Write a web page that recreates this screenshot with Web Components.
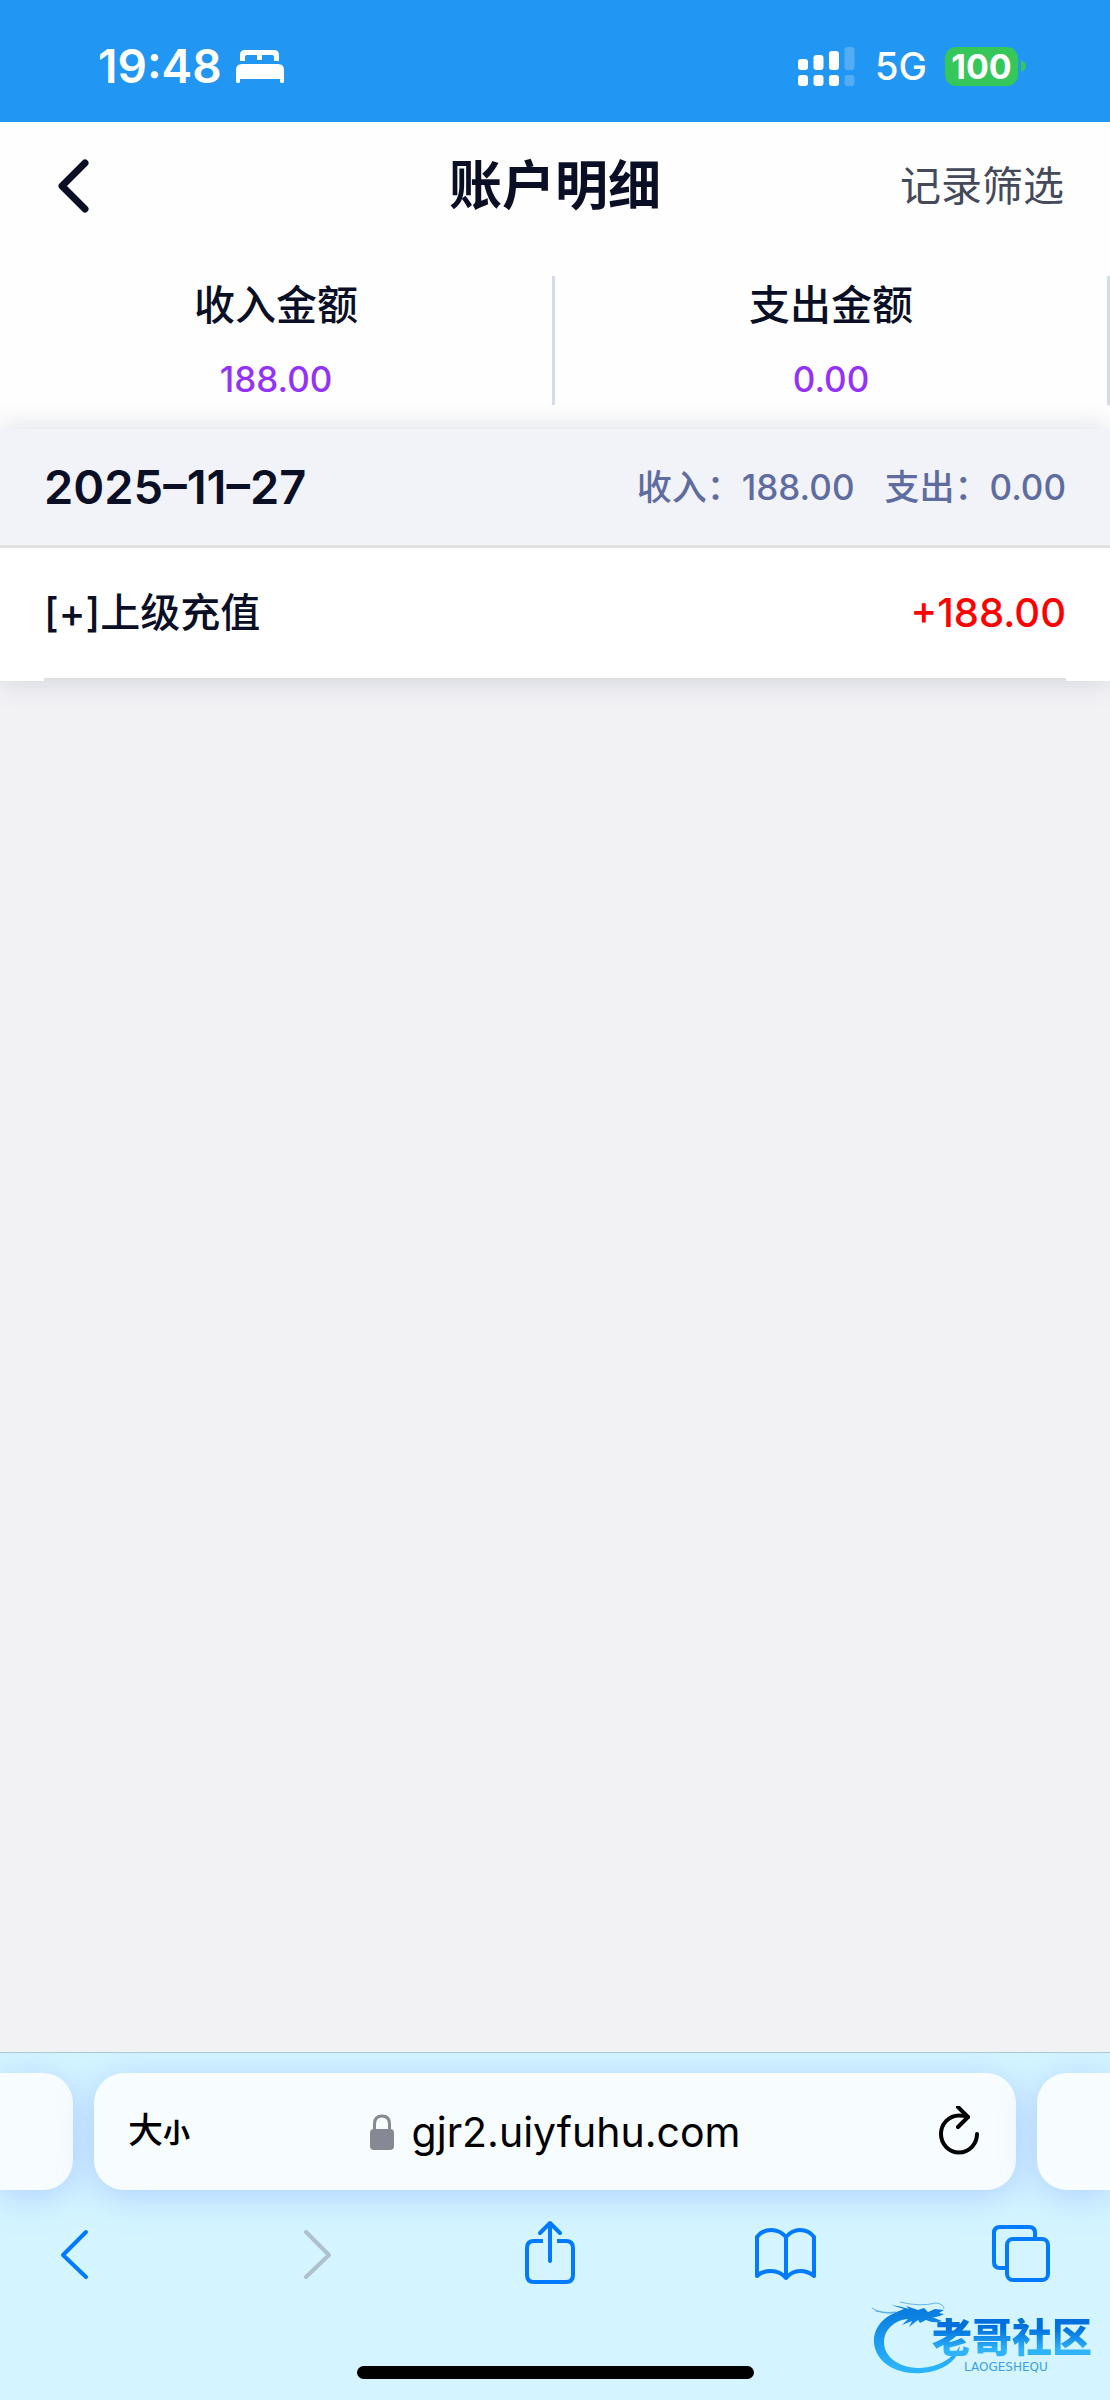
<!DOCTYPE html>
<html lang="zh-CN">
<head>
<meta charset="UTF-8">
<meta name="viewport" content="width=device-width, initial-scale=1.0">
<title>账户明细</title>
<style>
  :root {
    --ink: #0b0f26;
    --muted: #5f6ca0;
    --accent: #9333fa;
    --income: #ff0000;
    --line: #e0e0e1;
    --side: 44px;
  }

  body {
    margin: 0;
    min-height: 100vh;
    display: flex;
    flex-direction: column;
    background: #f2f2f5;
    color: var(--ink);
    font-family: Inter, "Noto Sans CJK SC", sans-serif;
    font-size: 41px;
    line-height: 58px;
  }

  main {
    flex: 1;
  }

  .totals {
    display: grid;
    grid-template-columns: 1fr 1fr;
    padding: 26px 0 24px;
    background: #fefefe;
  }
</style>
</head>
<body>
  <status-bar></status-bar>
  <page-header>
    账户明细
    <span slot="action">记录筛选</span>
  </page-header>
  <main>
    <section class="totals">
      <total-cell label="收入金额">188.00</total-cell>
      <total-cell label="支出金额">0.00</total-cell>
    </section>
    <day-group date="2025–11–27" income="188.00" expense="0.00">
      <record-row amount="+188.00">[+]上级充值</record-row>
    </day-group>
  </main>
  <browser-bar host="gjr2.uiyfuhu.com">
    <site-mark></site-mark>
  </browser-bar>

<script>
class StatusBar extends HTMLElement {
  connectedCallback() {
    this.attachShadow({ mode: 'open' });
    this.shadowRoot.innerHTML = `
      <style>
        :host {
          display: flex;
          justify-content: space-between;
          align-items: center;
          height: 122px;
          padding: 10px 84px 0 98px;
          box-sizing: border-box;
          background: #2196f3;
          color: #fff;
        }

        .left, .right {
          display: flex;
          align-items: center;
        }

        .left {
          gap: 14px;
        }

        .time {
          font-size: 46px;
          font-weight: 600;
        }

        .network {
          margin: 0 18px 0 20px;
          font-size: 38px;
          font-weight: 500;
        }

        .battery {
          width: 73px;
          height: 39px;
          border-radius: 11px;
          background: #35c759;
          font-size: 34px;
          font-weight: 700;
          line-height: 39px;
          text-align: center;
        }

        svg {
          display: block;
        }
      </style>
      <div class="left">
        <span class="time">19:48</span>
        <svg width="48" height="34" viewBox="0 0 48 34" fill="#fff">
          <path d="M4 12V6q0-5 5-5h29q5 0 5 5v6h-5V8q0-2-2-2H26v5h-5V6H11q-2 0-2 2v4z"/>
          <path d="M0 33V21q0-6 6-6h36q6 0 6 6v12q0 1-2 1t-2-1v-3H4v3q0 1-2 1t-2-1z"/>
        </svg>
      </div>
      <div class="right">
        <svg width="57" height="39" viewBox="0 0 57 39" fill="#fff">
          <rect x="0" y="12" width="10" height="11" rx="3"/>
          <rect x="15.500" y="8" width="10" height="15" rx="3"/>
          <rect x="31" y="4" width="10" height="19" rx="3"/>
          <rect x="0" y="28" width="10" height="11" rx="3"/>
          <rect x="15.500" y="28" width="10" height="11" rx="3"/>
          <rect x="31" y="28" width="10" height="11" rx="3"/>
          <g opacity="0.22">
            <rect x="46.500" y="0" width="10" height="23" rx="3"/>
            <rect x="46.500" y="28" width="10" height="11" rx="3"/>
          </g>
        </svg>
        <span class="network">5G</span>
        <span class="battery">100</span>
        <svg width="8" height="14" viewBox="0 0 8 14" fill="#35c759"><path d="M3 1q5 2 5 6t-5 6z"/></svg>
      </div>
    `;
  }
}

class PageHeader extends HTMLElement {
  connectedCallback() {
    this.attachShadow({ mode: 'open' });
    this.shadowRoot.innerHTML = `
      <style>
        :host {
          display: grid;
          grid-template-columns: 1fr auto 1fr;
          align-items: center;
          height: 128px;
          padding: 0 46px;
          background: #fefefe;
        }

        h1 {
          margin: 0;
          font-size: 53px;
          font-weight: 600;
        }

        button {
          padding: 0;
          border: none;
          background: none;
          color: #454a5b;
          font: inherit;
          cursor: pointer;
        }

        .back {
          justify-self: start;
          padding: 0 10px;
          color: var(--ink);
        }

        .action {
          justify-self: end;
        }

        svg {
          display: block;
        }
      </style>
      <button class="back" aria-label="返回">
        <svg width="36" height="60" viewBox="0 0 36 60" fill="none" stroke="currentColor" stroke-width="7" stroke-linecap="round" stroke-linejoin="round"><path d="M29 7L6 30l23 23"/></svg>
      </button>
      <h1><slot></slot></h1>
      <button class="action"><slot name="action"></slot></button>
    `;
  }
}

class TotalCell extends HTMLElement {
  connectedCallback() {
    this.attachShadow({ mode: 'open' });
    this.shadowRoot.innerHTML = `
      <style>
        :host {
          display: flex;
          flex-direction: column;
          gap: 20px;
          border-right: 3px solid #d5dce9;
          text-align: center;
          font-weight: 500;
        }

        .value {
          color: var(--accent);
          font-size: 35px;
          line-height: 51px;
        }
      </style>
      <div class="label">${this.getAttribute('label')}</div>
      <div class="value"><slot></slot></div>
    `;
  }
}

class DayGroup extends HTMLElement {
  connectedCallback() {
    this.attachShadow({ mode: 'open' });
    this.shadowRoot.innerHTML = `
      <style>
        :host {
          display: block;
          background: #fff;
          box-shadow: 0 0 27px rgba(70, 80, 130, 0.2);
        }

        header {
          display: flex;
          align-items: center;
          height: 116px;
          padding: 0 var(--side);
          border-bottom: 3px solid var(--line);
          background: #f2f3f9;
          color: var(--muted);
          font-size: 35px;
          font-weight: 500;
        }

        h2 {
          flex: 1;
          margin: 0;
          color: var(--ink);
          font-size: 47px;
          font-weight: 600;
        }

        span + span {
          margin-left: 30px;
        }
      </style>
      <header>
        <h2>${this.getAttribute('date')}</h2>
        <span>收入：${this.getAttribute('income')}</span>
        <span>支出：${this.getAttribute('expense')}</span>
      </header>
      <slot></slot>
    `;
  }
}

class RecordRow extends HTMLElement {
  connectedCallback() {
    this.attachShadow({ mode: 'open' });
    this.shadowRoot.innerHTML = `
      <style>
        :host {
          display: flex;
          justify-content: space-between;
          align-items: center;
          height: 130px;
          margin: 0 var(--side);
          border-bottom: 3px solid var(--line);
          font-size: 40px;
          font-weight: 500;
        }

        .amount {
          color: var(--income);
        }
      </style>
      <span><slot></slot></span>
      <span class="amount">${this.getAttribute('amount')}</span>
    `;
  }
}

class BrowserBar extends HTMLElement {
  connectedCallback() {
    this.attachShadow({ mode: 'open' });
    this.shadowRoot.innerHTML = `
      <style>
        :host {
          display: block;
          position: relative;
          overflow: hidden;
          border-top: 1px solid #a9c9dc;
          background: #d4f5ff;
        }

        .tabs {
          display: flex;
          gap: 21px;
          height: 117px;
          padding-top: 20px;
        }

        .tab, .peek {
          border-radius: 30px;
          background: #f7fcff;
          box-shadow: 0 6px 36px rgba(120, 150, 255, 0.4);
        }

        .peek {
          width: 73px;
        }

        .peek.prev {
          border-radius: 0 30px 30px 0;
        }

        .peek.next {
          border-radius: 30px 0 0 30px;
        }

        .tab {
          flex: 1;
          display: grid;
          grid-template-columns: 1fr auto 1fr;
          align-items: center;
          padding: 0 34px;
        }

        button {
          padding: 0;
          border: none;
          background: none;
          color: #007aff;
          font: inherit;
          cursor: pointer;
        }

        .tab button {
          color: #000;
        }

        .size {
          justify-self: start;
          font-size: 35px;
          font-weight: 500;
        }

        .size small {
          font-size: 27px;
          font-weight: 700;
        }

        .reload {
          justify-self: end;
        }

        .address {
          display: flex;
          align-items: center;
          gap: 18px;
        }

        input {
          field-sizing: content;
          padding: 0;
          border: none;
          outline: none;
          background: none;
          color: #000;
          font: inherit;
        }

        .tools {
          display: flex;
          justify-content: space-between;
          padding: 28px 58px 0 var(--side);
        }

        .tools button:disabled {
          color: #afbfcd;
        }

        .home {
          width: 397px;
          height: 13px;
          margin: 76px auto 21px;
          border-radius: 7px;
          background: #000;
        }

        svg {
          display: block;
          fill: none;
          stroke: currentColor;
          stroke-width: 4;
          stroke-linecap: round;
          stroke-linejoin: round;
        }

        ::slotted(site-mark) {
          position: absolute;
          right: 18px;
          bottom: 24px;
        }
      </style>
      <div class="tabs">
        <div class="peek prev"></div>
        <div class="tab">
          <button class="size">大<small>小</small></button>
          <label class="address">
            <svg width="24" height="36" viewBox="0 0 24 36" color="#868993" aria-label="安全连接">
              <rect x="0" y="15" width="24" height="21" rx="4" fill="currentColor" stroke="none"/>
              <path stroke-width="3" d="M4.500 17V10q0-8 7.500-8t7.500 8v7"/>
            </svg>
            <input type="text" value="${this.getAttribute('host')}" aria-label="地址" spellcheck="false">
          </label>
          <button class="reload" aria-label="重新载入">
            <svg width="44" height="52" viewBox="0 0 44 52">
              <path d="M39 28a18 18.500 0 1 1-18-18.500q5 0 9 1.500"/>
              <path d="M20 1l10 10-10 10"/>
            </svg>
          </button>
        </div>
        <div class="peek next"></div>
      </div>
      <nav class="tools">
        <button aria-label="后退">
          <svg width="62" height="72" viewBox="0 0 62 72"><path d="M42 14L19 37l23 22"/></svg>
        </button>
        <button aria-label="前进" disabled>
          <svg width="62" height="72" viewBox="0 0 62 72"><path d="M25 14l23 23-23 22"/></svg>
        </button>
        <button aria-label="分享">
          <svg width="62" height="72" viewBox="0 0 62 72">
            <path stroke-linecap="butt" d="M26 23H17q-7 0-7 7v27q0 7 7 7h32q7 0 7-7V30q0-7-7-7h-9"/>
            <path d="M33 43V5M23 15L33 5l10 10"/>
          </svg>
        </button>
        <button aria-label="书签">
          <svg width="62" height="72" viewBox="0 0 62 72">
            <path d="M32 19Q26 12 17 12 8 12 3 19V58Q8 53 17 53 26 53 32 60 38 53 46 53 54 53 60 58V19Q55 12 46 12 38 12 32 19V60"/>
          </svg>
        </button>
        <button aria-label="标签页">
          <svg width="62" height="72" viewBox="0 0 62 72">
            <rect x="17" y="21" width="41" height="41" rx="6"/>
            <path d="M17 50H10q-6 0-6-6V15q0-6 6-6h29q6 0 6 6v6"/>
          </svg>
        </button>
      </nav>
      <div class="home"></div>
      <slot></slot>
    `;
  }
}

class SiteMark extends HTMLElement {
  connectedCallback() {
    this.attachShadow({ mode: 'open' });
    this.shadowRoot.innerHTML = `
      <style>
        :host {
          display: grid;
          grid-template-columns: 60px auto;
          color: #3a9fe8;
        }

        svg {
          display: block;
          overflow: visible;
        }

        .name {
          background: linear-gradient(#0070dc 25%, #2fb4fb 80%);
          background-clip: text;
          color: transparent;
          font-size: 40px;
          font-weight: 900;
          line-height: 40px;
        }

        .words {
          padding-top: 18px;
        }

        .pinyin {
          padding-left: 32px;
          font-family: "DejaVu Sans", sans-serif;
          font-size: 12px;
          line-height: 18px;
        }
      </style>
      <svg width="60" height="76" viewBox="0 0 60 76">
        <defs>
          <linearGradient id="water" gradientUnits="userSpaceOnUse" x1="0" y1="0" x2="0" y2="75">
            <stop offset="0.1" stop-color="#0879dc"/>
            <stop offset="0.9" stop-color="#29b4fd"/>
          </linearGradient>
        </defs>
        <g fill="url(#water)">
          <path d="M34 10C14 13 1 26 2 43 4 63 25 75 50 73 71 71 85 62 88 46 80 59 67 67 48 68 28 68 12 58 12 42 12 30 21 21 37 18z"/>
          <path d="M22 13L32 9 19 5Q28 6 37 9L34 6 46 10 52 8 56 12 63 9 72 10 67 13 72 14Q66 18 60 17L70 21Q62 24 54 20L48 23 46 20 37 27 40 21 30 25 36 19 26 20z"/>
        </g>
        <path d="M0 8q8 6 24 4M3 11q11 3 23 2M28 2q20 5 36 1 8 1 8 6" fill="none" stroke="#3598e6" stroke-width="1" opacity="0.7"/>
      </svg>
      <div class="words">
        <div class="name">老哥社区</div>
        <div class="pinyin">LAOGESHEQU</div>
      </div>
    `;
  }
}

customElements.define('status-bar', StatusBar);
customElements.define('page-header', PageHeader);
customElements.define('total-cell', TotalCell);
customElements.define('day-group', DayGroup);
customElements.define('record-row', RecordRow);
customElements.define('browser-bar', BrowserBar);
customElements.define('site-mark', SiteMark);
</script>
</body>
</html>
